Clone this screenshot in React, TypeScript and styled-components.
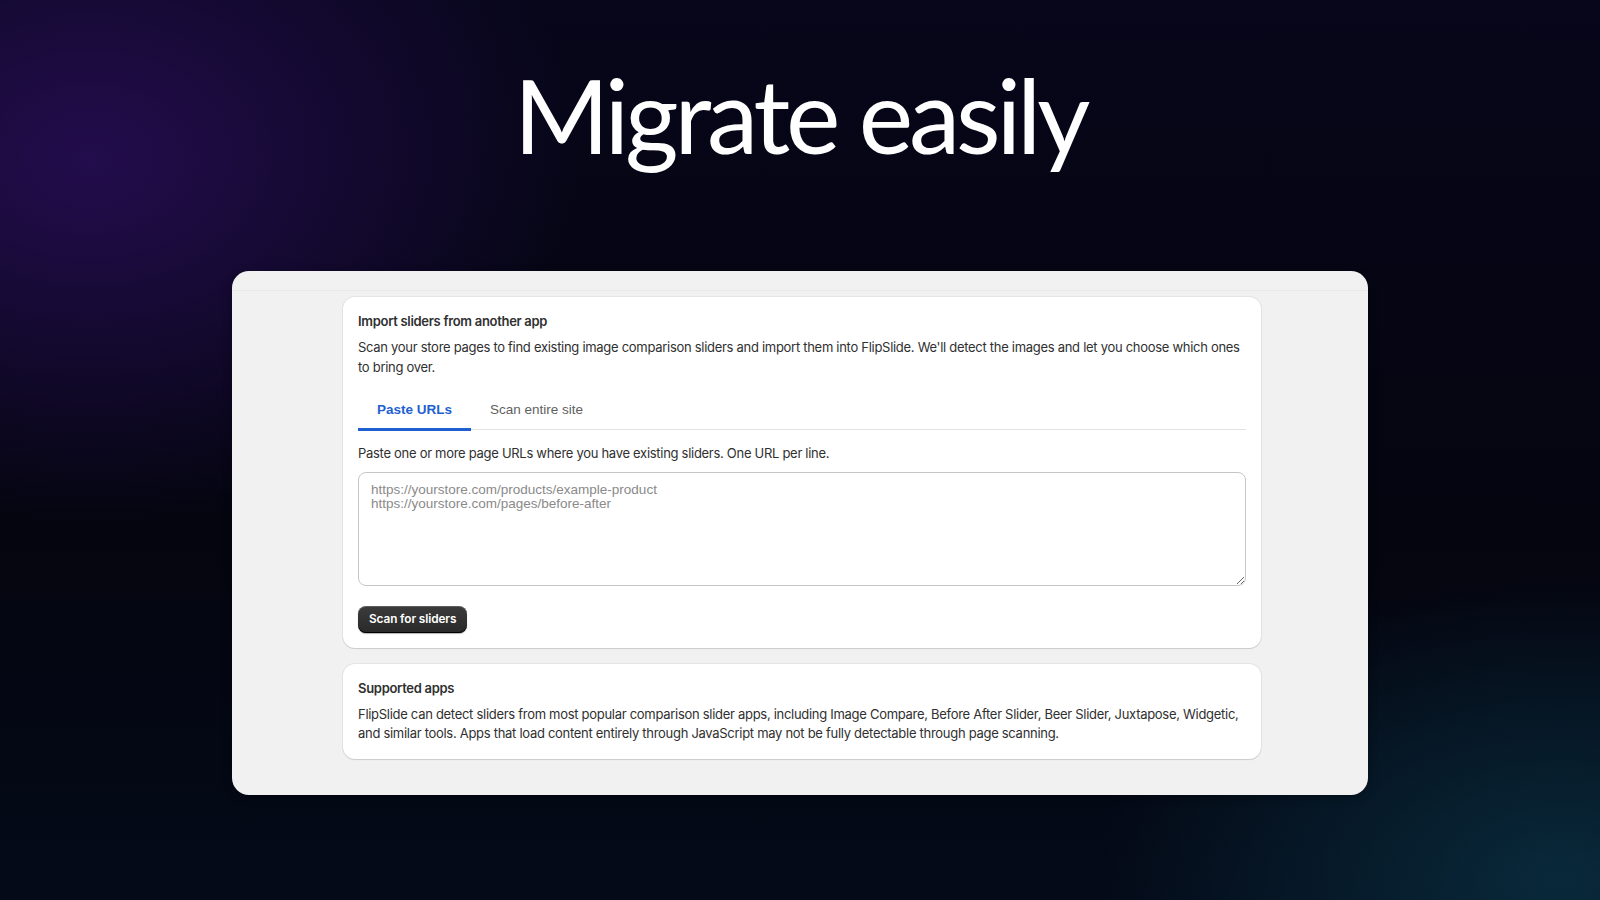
import React from "react";
import styled, { createGlobalStyle } from "styled-components";

const GlobalStyle = createGlobalStyle`
  html, body {
    margin: 0;
    padding: 0;
    height: 100%;
  }
  body {
    background-color: #04050f;
    background-image:
      radial-gradient(ellipse 700px 520px at 90px 160px, rgba(40, 14, 86, 0.85), rgba(40, 14, 86, 0) 70%),
      radial-gradient(ellipse 640px 420px at 1560px 880px, rgba(10, 52, 70, 0.75), rgba(10, 52, 70, 0) 72%),
      linear-gradient(180deg, #07061a 0%, #04050f 60%, #040a18 100%);
    font-family: "Inter", "Liberation Sans", sans-serif;
    overflow: hidden;
  }
`;

const Page = styled.div`
  width: 1600px;
  height: 900px;
  display: flex;
  flex-direction: column;
  align-items: center;
`;

const Title = styled.h1`
  margin: 53px 0 0;
  font-family: "Lato", "Open Sans", sans-serif;
  font-weight: 400;
  font-size: 103px;
  line-height: 123px;
  color: #ffffff;
  letter-spacing: -4.1px;
`;

const Panel = styled.div`
  margin-top: 95px;
  width: 1136px;
  height: 524px;
  background: #f1f1f1;
  border-radius: 17px;
  overflow: hidden;
  box-shadow: 0 2px 10px rgba(0, 0, 0, 0.35);
  display: flex;
  flex-direction: column;
`;

const PanelStrip = styled.div`
  height: 19px;
  flex: none;
  border-bottom: 1px solid #e9e9e9;
`;

const PanelBody = styled.div`
  padding: 6px 0 0 4px;
  display: flex;
  flex-direction: column;
  align-items: center;
  gap: 16px;
`;

const Card = styled.section`
  width: 918px;
  box-sizing: border-box;
  padding: 15px;
  background: #ffffff;
  border-radius: 12px;
  box-shadow: 0 1px 0 rgba(26, 26, 26, 0.07), 0 0 0 1px rgba(26, 26, 26, 0.06),
    0 1px 2px rgba(0, 0, 0, 0.05);
`;

const CardTitle = styled.h2`
  margin: 0;
  font-size: 13px;
  letter-spacing: -0.3px;
  line-height: 18px;
  font-weight: 600;
  color: #303030;
`;

const Text = styled.p<{ $top?: number }>`
  margin: ${(p) => p.$top ?? 8}px 0 0;
  font-size: 13px;
  letter-spacing: -0.29px;
  line-height: 19.5px;
  color: #303030;
`;

const Tabs = styled.div`
  margin-top: 12px;
  display: flex;
  border-bottom: 1.5px solid #e3e3e3;
`;

const Tab = styled.button<{ $active?: boolean }>`
  position: relative;
  height: 40px;
  padding: 0 19px;
  border: 0;
  background: transparent;
  font-family: "Liberation Sans", Arial, sans-serif;
  font-size: 13.5px;
  font-weight: ${(p) => (p.$active ? 700 : 400)};
  color: ${(p) => (p.$active ? "#1f5fd1" : "#5f5f5f")};
  cursor: pointer;

  &::after {
    content: "";
    position: absolute;
    left: 0;
    right: 0;
    bottom: -1.5px;
    height: 3px;
    background: ${(p) => (p.$active ? "#1f5fd1" : "transparent")};
  }
`;

const UrlInput = styled.textarea`
  display: block;
  margin-top: 8px;
  width: 100%;
  height: 114px;
  box-sizing: border-box;
  padding: 10px 12px;
  border: 1px solid #c6c6c6;
  border-radius: 8px;
  resize: vertical;
  font-family: "Liberation Sans", Arial, sans-serif;
  font-size: 13.5px;
  line-height: 14.8px;
  color: #303030;
  outline: none;

  &::placeholder {
    color: #8a8a8a;
  }
`;

const PrimaryButton = styled.button`
  margin-top: 20px;
  height: 27px;
  padding: 0 11px;
  border: 0;
  border-radius: 8px;
  background: linear-gradient(180deg, #3b3b3b 0%, #2a2a2a 100%);
  box-shadow: inset 0 -1px 0 #000, inset 0 1px 0 rgba(255, 255, 255, 0.18),
    0 1px 1px rgba(0, 0, 0, 0.3);
  color: #ffffff;
  font-family: "Inter", "Liberation Sans", sans-serif;
  font-size: 11.8px;
  letter-spacing: -0.1px;
  font-weight: 600;
  cursor: pointer;
`;

const App: React.FC = () => {
  return (
    <>
      <GlobalStyle />
      <Page>
        <Title>Migrate easily</Title>
        <Panel>
          <PanelStrip />
          <PanelBody>
            <Card>
              <CardTitle>Import sliders from another app</CardTitle>
              <Text>
                Scan your store pages to find existing image comparison sliders
                and import them into FlipSlide. We'll detect the images and let
                you choose which ones to bring over.
              </Text>
              <Tabs>
                <Tab $active>Paste URLs</Tab>
                <Tab>Scan entire site</Tab>
              </Tabs>
              <Text $top={14}>
                Paste one or more page URLs where you have existing sliders. One
                URL per line.
              </Text>
              <UrlInput
                placeholder={
                  "https://yourstore.com/products/example-product\nhttps://yourstore.com/pages/before-after"
                }
              />
              <PrimaryButton>Scan for sliders</PrimaryButton>
            </Card>
            <Card>
              <CardTitle>Supported apps</CardTitle>
              <Text>
                FlipSlide can detect sliders from most popular comparison slider
                apps, including Image Compare, Before After Slider, Beer Slider,
                Juxtapose, Widgetic, and similar tools. Apps that load content
                entirely through JavaScript may not be fully detectable through
                page scanning.
              </Text>
            </Card>
          </PanelBody>
        </Panel>
      </Page>
    </>
  );
};

export default App;
